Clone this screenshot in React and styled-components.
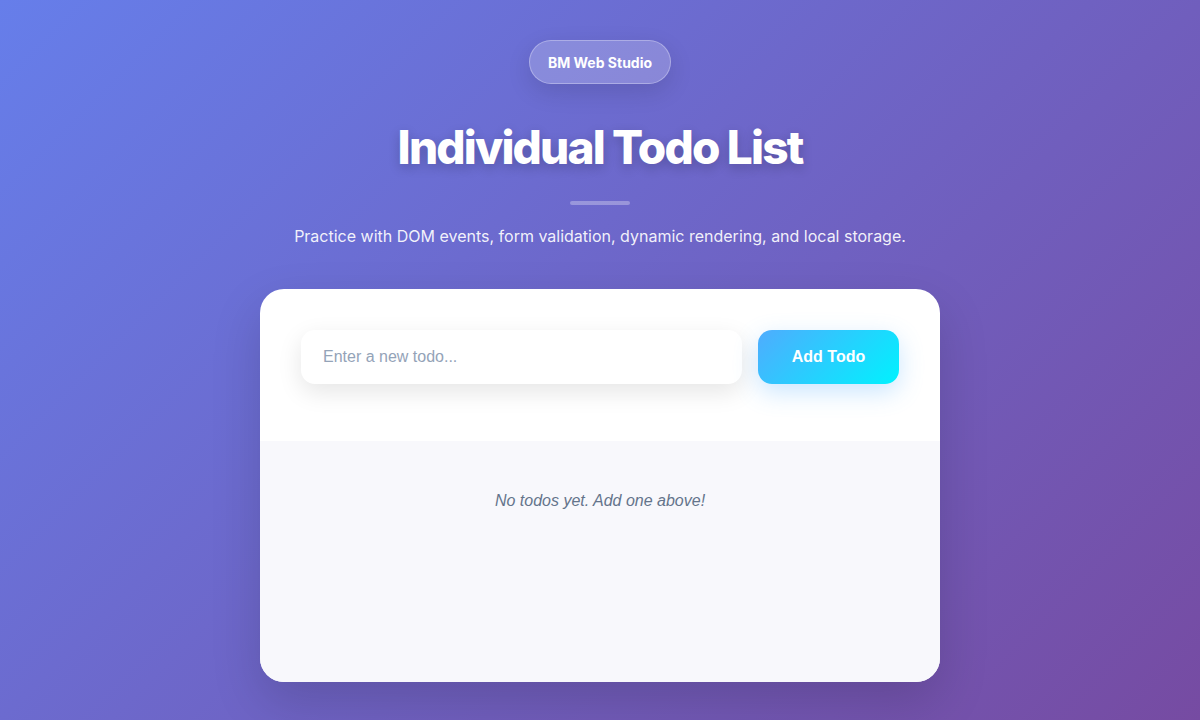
import React, { useState } from "react";
import styled, { createGlobalStyle } from "styled-components";

const GlobalStyle = createGlobalStyle`
  * { box-sizing: border-box; }
  body {
    margin: 0;
    font-family: Inter, "Noto Sans", sans-serif;
    background: linear-gradient(135deg, #667eea 0%, #764ba2 100%);
    min-height: 100vh;
  }
`;

const Page = styled.div`
  min-height: 100vh;
  display: flex;
  flex-direction: column;
  align-items: center;
  padding: 40px 20px;
`;

const Header = styled.header`
  display: flex;
  flex-direction: column;
  align-items: center;
  color: white;
`;

const Badge = styled.div`
  height: 44px;
  padding: 0 18px;
  display: flex;
  align-items: center;
  border-radius: 999px;
  background: rgba(255, 255, 255, 0.2);
  border: 1px solid rgba(255, 255, 255, 0.3);
  box-shadow: 0 8px 24px rgba(0, 0, 0, 0.12);
  font-size: 14px;
  font-weight: 700;
`;

const Title = styled.h1`
  margin: 36px 0 0;
  font-size: 46px;
  font-weight: 800;
  letter-spacing: -0.04em;
  line-height: 55px;
  text-shadow: 0 4px 12px rgba(0, 0, 0, 0.2);
`;

const Divider = styled.div`
  width: 60px;
  height: 4px;
  border-radius: 2px;
  margin-top: 26px;
  background: rgba(255, 255, 255, 0.3);
`;

const Subtitle = styled.p`
  margin: 21px 0 0;
  font-size: 16px;
  color: rgba(255, 255, 255, 0.92);
`;

const Card = styled.main`
  width: 680px;
  margin-top: 43px;
  background: white;
  border-radius: 24px;
  overflow: hidden;
  box-shadow: 0 20px 50px rgba(0, 0, 0, 0.15);
`;

const Form = styled.form`
  display: flex;
  gap: 16px;
  padding: 41px 41px 57px;
`;

const Input = styled.input`
  flex: 1;
  height: 54px;
  border: none;
  border-radius: 14px;
  padding: 0 22px;
  font-family: "Liberation Sans", Arial, sans-serif;
  font-size: 16px;
  color: #334155;
  background: white;
  box-shadow: 0 8px 24px rgba(0, 0, 0, 0.1);
  outline: none;

  &::placeholder {
    color: #94a3b8;
  }
`;

const AddButton = styled.button`
  width: 141px;
  height: 54px;
  border: none;
  border-radius: 14px;
  color: white;
  font-family: "Liberation Sans", Arial, sans-serif;
  font-size: 16px;
  font-weight: 700;
  background: linear-gradient(135deg, #4facfe 0%, #00f2fe 100%);
  box-shadow: 0 8px 24px rgba(79, 172, 254, 0.3);
  cursor: pointer;
`;

const ListArea = styled.section`
  min-height: 241px;
  background: #f8f8fc;
  padding: 51px 20px;
  text-align: center;
`;

const Empty = styled.p`
  margin: 0;
  font-family: "Liberation Sans", Arial, sans-serif;
  font-size: 16px;
  font-style: italic;
  color: #64748b;
`;

export default function App() {
  const [text, setText] = useState("");

  return (
    <>
      <GlobalStyle />
      <Page>
        <Header>
          <Badge>BM Web Studio</Badge>
          <Title>Individual Todo List</Title>
          <Divider />
          <Subtitle>
            Practice with DOM events, form validation, dynamic rendering, and local storage.
          </Subtitle>
        </Header>
        <Card>
          <Form onSubmit={(e) => e.preventDefault()}>
            <Input
              placeholder="Enter a new todo..."
              value={text}
              onChange={(e) => setText(e.target.value)}
            />
            <AddButton type="submit">Add Todo</AddButton>
          </Form>
          <ListArea>
            <Empty>No todos yet. Add one above!</Empty>
          </ListArea>
        </Card>
      </Page>
    </>
  );
}
